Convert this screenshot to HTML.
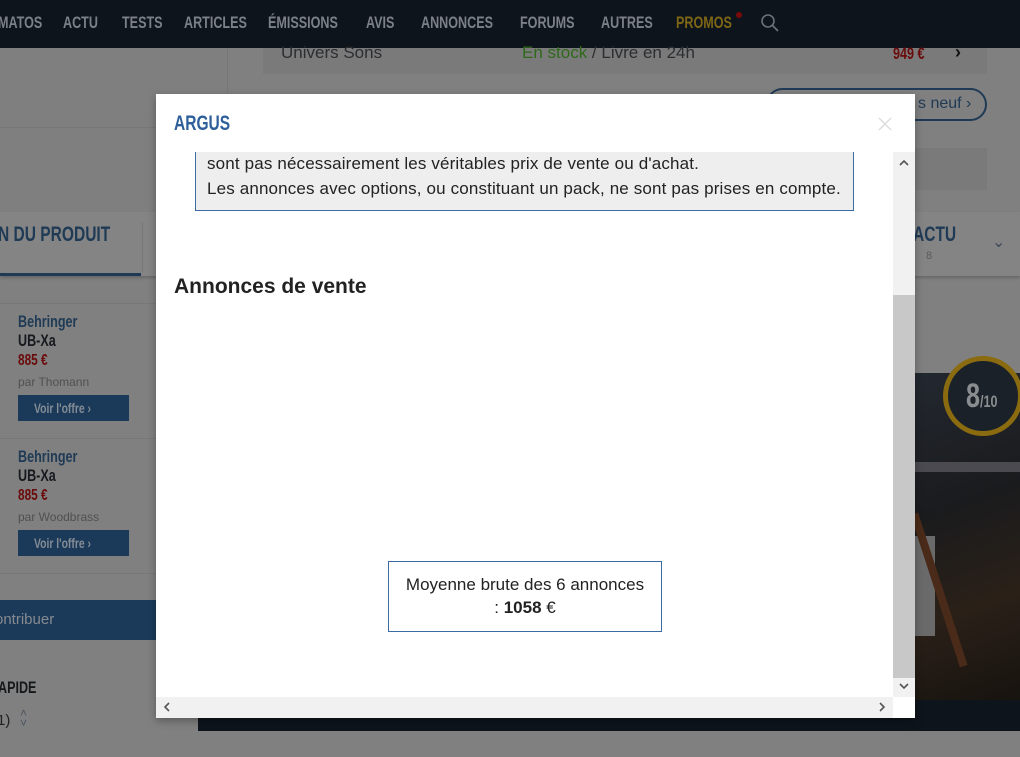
<!DOCTYPE html>
<html><head><meta charset="utf-8"><style>
*{margin:0;padding:0;box-sizing:border-box}
body{width:1020px;height:757px;overflow:hidden;background:#808080;font-family:"Liberation Sans",sans-serif;position:relative}
.a{position:absolute}
.cn{font-family:"Liberation Sans",sans-serif;font-weight:bold;transform:scaleX(0.74);transform-origin:0 0;white-space:nowrap}
.nav{left:0;top:0;width:1020px;height:48px;background:#0e141b}
.nav span{position:absolute;top:13px;font-size:17px;color:#7c8087;font-weight:bold;transform:scaleX(0.74);transform-origin:0 0;white-space:nowrap}
</style></head><body>
<div class="a nav">
<span style="left:-2px">MATOS</span><span style="left:63px">ACTU</span><span style="left:122px">TESTS</span><span style="left:184px">ARTICLES</span><span style="left:268px">ÉMISSIONS</span><span style="left:366px">AVIS</span><span style="left:421px">ANNONCES</span><span style="left:520px">FORUMS</span><span style="left:601px">AUTRES</span><span style="left:676px;color:#7d6615">PROMOS</span>
<div class="a" style="left:736px;top:12px;width:6px;height:6px;border-radius:50%;background:#7a0a0a"></div>
<svg class="a" style="left:760px;top:13px" width="20" height="20"><circle cx="8" cy="8" r="6" fill="none" stroke="#6c7077" stroke-width="1.6"/><line x1="12.5" y1="12.5" x2="18" y2="18" stroke="#6c7077" stroke-width="1.8"/></svg>
</div>
<div class="a" style="left:0;top:48px;width:228px;height:228px;background:#7f7f7f;border-right:1px solid #777"></div>
<div class="a" style="left:0;top:127px;width:228px;height:1px;background:#777"></div>
<div class="a" style="left:263px;top:48px;width:724px;height:26px;background:#7a7a7a"></div>
<div class="a" style="left:281px;top:43px;font-size:17px;color:#2c2e31">Univers Sons</div>
<div class="a" style="left:522px;top:43px;font-size:17px;color:#2c2e31"><span style="color:#2f6a1a">En stock</span> / Livre en 24h</div>
<div class="a cn" style="left:893px;top:44px;font-size:17px;color:#6a0a0a">949 €</div>
<div class="a" style="left:955px;top:42px;font-size:18px;font-weight:bold;color:#111">›</div>
<div class="a" style="left:766px;top:88px;width:221px;height:33px;border:2px solid #1f3a55;border-radius:17px"></div>
<div class="a" style="left:918px;top:95px;font-size:16px;color:#1f3a55">s neuf ›</div>
<div class="a" style="left:263px;top:148px;width:724px;height:42px;background:#7a7a7a"></div>
<div class="a" style="left:0;top:212px;width:1020px;height:64px;background:#848484;box-shadow:0 2px 3px rgba(0,0,0,.2)"></div>
<div class="a cn" style="left:-2px;top:223px;font-size:21px;color:#1f3a55">N DU PRODUIT</div>
<div class="a" style="left:0;top:273px;width:141px;height:3px;background:#1f3a55"></div>
<div class="a" style="left:142px;top:222px;width:1px;height:50px;background:#777"></div>
<div class="a cn" style="left:913px;top:223px;font-size:21px;color:#1f3a55">ACTU</div>
<div class="a" style="left:926px;top:250px;font-size:11px;color:#5a5a5a">8</div>
<div class="a" style="left:992px;top:232px;font-size:16px;color:#3d4a58">⌄</div>
<div class="a" style="left:0;top:303px;width:156px;height:1px;background:#777"></div>
<div class="a" style="left:0;top:438px;width:156px;height:1px;background:#777"></div>
<div class="a" style="left:0;top:573px;width:156px;height:1px;background:#777"></div>
<div class="a cn" style="left:18px;top:312px;font-size:17px;line-height:19px;color:#1f3a55">Behringer<br><span style="color:#16191d">UB-Xa</span><br><span style="color:#6a0a0a;font-size:16px">885 €</span></div>
<div class="a" style="left:18px;top:375px;font-size:12px;color:#505050">par Thomann</div>
<div class="a" style="left:18px;top:395px;width:111px;height:26px;background:#1b3a5a"></div>
<div class="a cn" style="left:34px;top:400px;color:#848c94;font-size:14px">Voir l'offre ›</div>
<div class="a cn" style="left:18px;top:447px;font-size:17px;line-height:19px;color:#1f3a55">Behringer<br><span style="color:#16191d">UB-Xa</span><br><span style="color:#6a0a0a;font-size:16px">885 €</span></div>
<div class="a" style="left:18px;top:510px;font-size:12px;color:#505050">par Woodbrass</div>
<div class="a" style="left:18px;top:530px;width:111px;height:26px;background:#1b3a5a"></div>
<div class="a cn" style="left:34px;top:535px;color:#848c94;font-size:14px">Voir l'offre ›</div>
<div class="a" style="left:0;top:600px;width:160px;height:40px;background:#1b3a5a"></div>
<div class="a" style="left:-5px;top:611px;font-size:15px;color:#868a8f">ontribuer</div>
<div class="a cn" style="left:-2px;top:678px;font-size:17px;color:#15181b">APIDE</div>
<div class="a" style="left:-3px;top:712px;font-size:15px;color:#222">1)</div>
<div class="a" style="left:20px;top:708px;font-size:12px;line-height:10px;color:#4a5560">˄<br>˅</div>
<div class="a" style="left:198px;top:700px;width:822px;height:31px;background:#0e141b"></div>
<div class="a" style="left:915px;top:373px;width:105px;height:327px;background:linear-gradient(160deg,#232830,#1a1b1d 40%,#2a2018 70%,#17130f)"></div>
<div class="a" style="left:915px;top:462px;width:105px;height:10px;background:#4a4a50"></div>
<div class="a" style="left:915px;top:536px;width:20px;height:100px;background:#6a6a6a"></div>
<div class="a" style="left:935px;top:510px;width:8px;height:160px;background:#4a2a18;transform:rotate(-18deg)"></div>
<div class="a" style="left:943px;top:356px;width:80px;height:80px;border-radius:50%;border:5px solid #8a6b10;background:#1b2129"></div>
<div class="a cn" style="left:966px;top:377px;font-size:34px;color:#8a8d90">8<span style="font-size:17px">/10</span></div>
<!-- modal -->
<div class="a" style="left:156px;top:94px;width:759px;height:624px;background:#fff;box-shadow:0 3px 8px rgba(0,0,0,.3)"></div>
<div class="a cn" style="left:174px;top:112px;font-size:21px;color:#2e5f9a">ARGUS</div>
<svg class="a" style="left:877px;top:116px" width="16" height="16"><path d="M2 2L14 14M14 2L2 14" stroke="#ddd" stroke-width="1.5"/></svg>
<div class="a" style="left:195px;top:152px;width:659px;height:59px;background:#eee;border:1px solid #3c6aa3;border-top:none"></div>
<div class="a" style="left:207px;top:151px;font-size:17px;letter-spacing:0.15px;line-height:25px;color:#222;white-space:nowrap">sont pas nécessairement les véritables prix de vente ou d'achat.<br>Les annonces avec options, ou constituant un pack, ne sont pas prises en compte.</div>
<div class="a" style="left:174px;top:275px;font-size:21px;font-weight:bold;color:#222">Annonces de vente</div>
<div class="a" style="left:388px;top:561px;width:274px;height:71px;border:1px solid #3c6aa3;text-align:center;font-size:17px;line-height:23px;color:#222;padding-top:11px">Moyenne brute des 6 annonces<br>: <b>1058</b> €</div>
<div class="a" style="left:893px;top:152px;width:22px;height:545px;background:#f1f1f1"></div>
<div class="a" style="left:893px;top:295px;width:22px;height:383px;background:#c8c8c8"></div>
<svg class="a" style="left:897px;top:156px" width="14" height="14"><path d="M3 9L7 5L11 9" fill="none" stroke="#555" stroke-width="1.6"/></svg>
<svg class="a" style="left:897px;top:679px" width="14" height="14"><path d="M3 5L7 9L11 5" fill="none" stroke="#555" stroke-width="1.6"/></svg>
<div class="a" style="left:156px;top:697px;width:737px;height:21px;background:#f1f1f1"></div>
<div class="a" style="left:893px;top:697px;width:22px;height:21px;background:#fff"></div>
<svg class="a" style="left:160px;top:700px" width="14" height="14"><path d="M9 3L5 7L9 11" fill="none" stroke="#555" stroke-width="1.6"/></svg>
<svg class="a" style="left:875px;top:700px" width="14" height="14"><path d="M5 3L9 7L5 11" fill="none" stroke="#555" stroke-width="1.6"/></svg>
</body></html>
